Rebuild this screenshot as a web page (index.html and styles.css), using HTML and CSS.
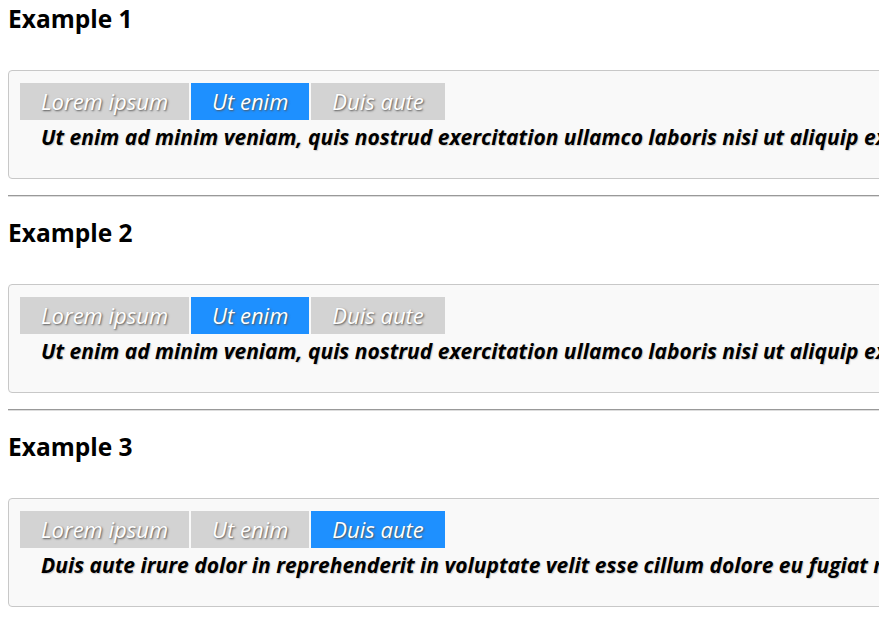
FILE: index.html
```html
<!DOCTYPE html>
<html lang="en">

<head>
    <meta charset="UTF-8">
    <title>Tabs Examples</title>
    <link rel="stylesheet" href="styles.css">
</head>

<body>
    <div class="page">
        <h2>Example 1</h2>
        <div class="tabs">
            <div class="tab-bar">
                <span class="tab">Lorem ipsum</span>
                <span class="tab active">Ut enim</span>
                <span class="tab">Duis aute</span>
            </div>
            <p class="tab-panel">Ut enim ad minim veniam, quis nostrud exercitation ullamco laboris nisi ut aliquip ex ea commodo consequat.</p>
        </div>
        <hr>

        <h2>Example 2</h2>
        <div class="tabs">
            <div class="tab-bar">
                <span class="tab">Lorem ipsum</span>
                <span class="tab active">Ut enim</span>
                <span class="tab">Duis aute</span>
            </div>
            <p class="tab-panel">Ut enim ad minim veniam, quis nostrud exercitation ullamco laboris nisi ut aliquip ex ea commodo consequat.</p>
        </div>
        <hr>

        <h2>Example 3</h2>
        <div class="tabs">
            <div class="tab-bar">
                <span class="tab">Lorem ipsum</span>
                <span class="tab">Ut enim</span>
                <span class="tab active">Duis aute</span>
            </div>
            <p class="tab-panel">Duis aute irure dolor in reprehenderit in voluptate velit esse cillum dolore eu fugiat nulla pariatur.</p>
        </div>
    </div>
</body>

</html>
```

FILE: styles.css
```css
html,
body {
    overflow-x: hidden;
}

body {
    margin: 0;
    font-family: "Open Sans", "Noto Sans", sans-serif;
    color: #000;
    background-color: #fff;
}

.page {
    width: max-content;
    padding: 0 8px;
}

h2 {
    margin: 0 0 35px;
    padding-top: 2px;
    font-size: 24.5px;
    line-height: 33px;
    font-weight: bold;
}

hr {
    margin: 16px 0 17px;
    border: none;
    border-top: 1px solid #999;
    border-bottom: 1px solid #ddd;
}

.tabs {
    background-color: #f9f9f9;
    border: 1px solid #c8c8c8;
    border-radius: 4px;
    padding: 12px 11px 27px;
}

.tab-bar {
    display: flex;
    gap: 2px;
}

.tab {
    background-color: #d3d3d3;
    color: #fff;
    font-size: 22px;
    font-style: italic;
    line-height: 37px;
    padding: 0 21px;
    text-shadow: 1px 1px 2px #555;
    white-space: nowrap;
}

.tab.active {
    background-color: #1e90ff;
}

.tab-panel {
    margin: 0;
    padding: 4px 21px 0;
    font-size: 21px;
    line-height: 27px;
    font-weight: bold;
    font-style: italic;
    white-space: nowrap;
    text-shadow: 1px 1px 1px #ccc;
}
```
